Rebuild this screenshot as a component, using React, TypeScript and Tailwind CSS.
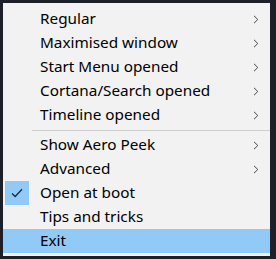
const groups = [
  [
    { label: "Regular", sub: true },
    { label: "Maximised window", sub: true },
    { label: "Start Menu opened", sub: true },
    { label: "Cortana/Search opened", sub: true },
    { label: "Timeline opened", sub: true },
  ],
  [
    { label: "Show Aero Peek", sub: true },
    { label: "Advanced", sub: true },
    { label: "Open at boot", checked: true },
    { label: "Tips and tricks" },
    { label: "Exit", active: true },
  ],
];

type Item = { label: string; sub?: boolean; checked?: boolean; active?: boolean };

const Chevron = () => (
  <svg width="6" height="9" viewBox="0 0 6 9" className="shrink-0">
    <path d="M1 0.8 L4.8 4.5 L1 8.2" fill="none" stroke="#444" strokeWidth="1" />
  </svg>
);

const Check = () => (
  <svg width="12" height="10" viewBox="0 0 12 10">
    <path d="M1 5.5 L4.2 8.5 L11 1.2" fill="none" stroke="#1a2a3a" strokeWidth="1.3" />
  </svg>
);

const Row = ({ item }: { item: Item }) => (
  <div
    className={`flex h-6 items-center pr-[11px] ${item.active ? "bg-[#91c9f7]" : ""}`}
  >
    <div className="flex w-[37px] shrink-0 items-center">
      {item.checked && (
        <div className="ml-[2px] flex h-6 w-6 items-center justify-center bg-[#91c9f7]">
          <Check />
        </div>
      )}
    </div>
    <span className="text-[15.3px] leading-none text-black">{item.label}</span>
    {item.sub && (
      <span className="ml-auto">
        <Chevron />
      </span>
    )}
  </div>
);

export default function App() {
  return (
    <div
      className="h-[259px] w-[276px] bg-[#1d2029] pl-[3px] pt-[3px]"
      style={{ fontFamily: '"Noto Sans", "Open Sans", sans-serif' }}
    >
      <div className="h-[253px] w-[267px] bg-[#f2f2f2] pt-1">
        {groups.map((g, gi) => (
          <div key={gi}>
            {gi > 0 && (
              <div className="flex h-[6px] items-center pl-[29px]">
                <div className="h-px w-full bg-[#cfcfcf]" />
              </div>
            )}
            {g.map((item) => (
              <Row key={item.label} item={item} />
            ))}
          </div>
        ))}
      </div>
    </div>
  );
}
